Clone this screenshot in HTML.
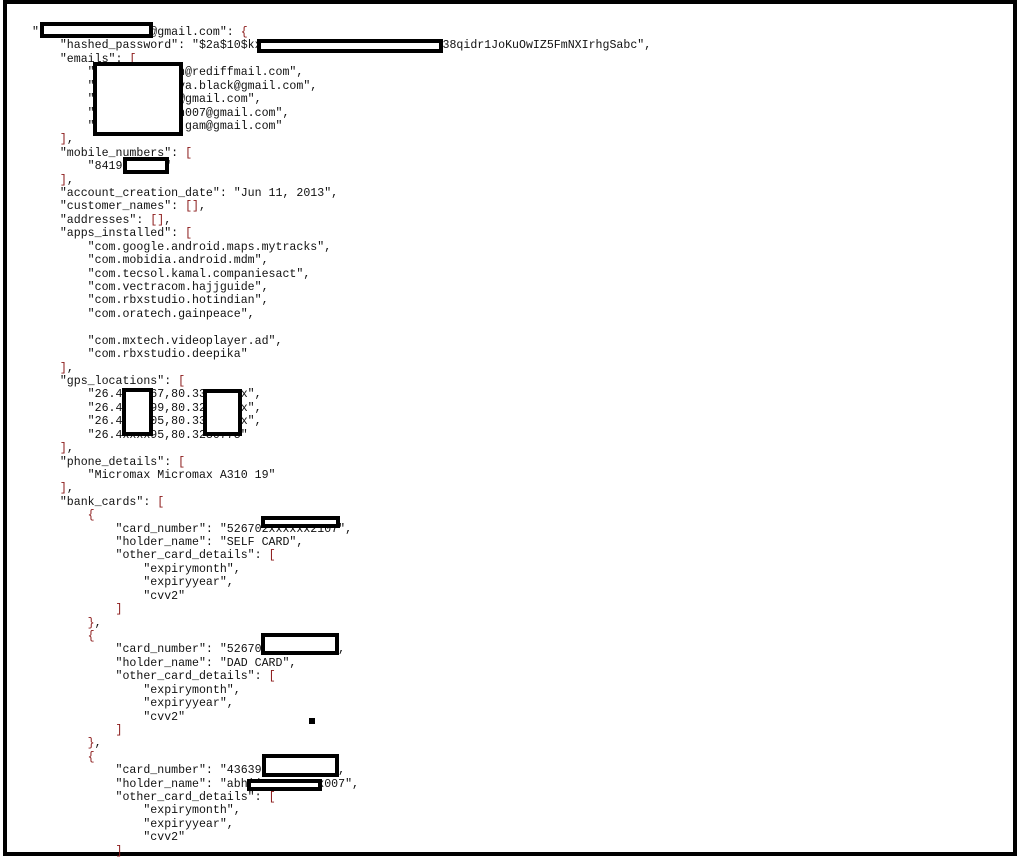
<!DOCTYPE html>
<html><head><meta charset="utf-8"><style>
html,body{margin:0;padding:0;background:#fff;width:1017px;height:857px;overflow:hidden;position:relative}
.frame{position:absolute;left:3px;top:0;width:1006px;height:848px;border:4px solid #000;border-top-width:4px}
pre{position:absolute;left:32px;top:26px;margin:0;font-family:"Liberation Mono",monospace;font-size:11.6px;line-height:13.42px;color:#111;letter-spacing:0}
.r{color:#8b1a1a}
.b{position:absolute;background:#fff;border:4px solid #000;box-sizing:border-box}
</style></head><body>
<div class="frame"></div>
<pre>"sxxxxxxxxxxxxxxx@gmail.com": <span class="r">{</span>
    "hashed_password": "$2a$10$kxxxxxxxxxxxxxxxxxxxxxxxxxxx38qidr1JoKuOwIZ5FmNXIrhgSabc",
    "emails": <span class="r">[</span>
        "xxxxxxxxxxxxn@rediffmail.com",
        "xxxxxxxxxxxxva.black@gmail.com",
        "xxxxxxxxxxxx@gmail.com",
        "xxxxxxxxxxxxn007@gmail.com",
        "xxxxxxxxxxxx.gam@gmail.com"
    <span class="r">]</span>,
    "mobile_numbers": <span class="r">[</span>
        "8419xxxxxx"
    <span class="r">]</span>,
    "account_creation_date": "Jun 11, 2013",
    "customer_names": <span class="r">[]</span>,
    "addresses": <span class="r">[]</span>,
    "apps_installed": <span class="r">[</span>
        "com.google.android.maps.mytracks",
        "com.mobidia.android.mdm",
        "com.tecsol.kamal.companiesact",
        "com.vectracom.hajjguide",
        "com.rbxstudio.hotindian",
        "com.oratech.gainpeace",

        "com.mxtech.videoplayer.ad",
        "com.rbxstudio.deepika"
    <span class="r">]</span>,
    "gps_locations": <span class="r">[</span>
        "26.4xxxx67,80.33xxxxxx",
        "26.4xxxx99,80.32xxxxxx",
        "26.4xxxx05,80.33xxxxxx",
        "26.4xxxx95,80.3230775"
    <span class="r">]</span>,
    "phone_details": <span class="r">[</span>
        "Micromax Micromax A310 19"
    <span class="r">]</span>,
    "bank_cards": <span class="r">[</span>
        <span class="r">{</span>
            "card_number": "526702xxxxxx2107",
            "holder_name": "SELF CARD",
            "other_card_details": <span class="r">[</span>
                "expirymonth",
                "expiryyear",
                "cvv2"
            <span class="r">]</span>
        <span class="r">}</span>,
        <span class="r">{</span>
            "card_number": "52670xxxxxxxxxx",
            "holder_name": "DAD CARD",
            "other_card_details": <span class="r">[</span>
                "expirymonth",
                "expiryyear",
                "cvv2"
            <span class="r">]</span>
        <span class="r">}</span>,
        <span class="r">{</span>
            "card_number": "43639xxxxxxxxxx",
            "holder_name": "abhijxxxxxxxxx007",
            "other_card_details": <span class="r">[</span>
                "expirymonth",
                "expiryyear",
                "cvv2"
            <span class="r">]</span>
</pre>
<div class="b" style="left:40px;top:22px;width:113px;height:16px"></div>
<div class="b" style="left:257px;top:39px;width:186px;height:14px"></div>
<div class="b" style="left:93px;top:62px;width:90px;height:74px"></div>
<div class="b" style="left:123px;top:157px;width:46px;height:17px"></div>
<div class="b" style="left:122px;top:388px;width:31px;height:48px"></div>
<div class="b" style="left:203px;top:389px;width:39px;height:47px"></div>
<div class="b" style="left:261px;top:516px;width:79px;height:12px"></div>
<div class="b" style="left:261px;top:633px;width:78px;height:22px"></div>
<div style="position:absolute;left:309px;top:718px;width:6px;height:6px;background:#000"></div>
<div class="b" style="left:262px;top:754px;width:77px;height:23px"></div>
<div class="b" style="left:247px;top:779px;width:75px;height:12px"></div>
</body></html>
